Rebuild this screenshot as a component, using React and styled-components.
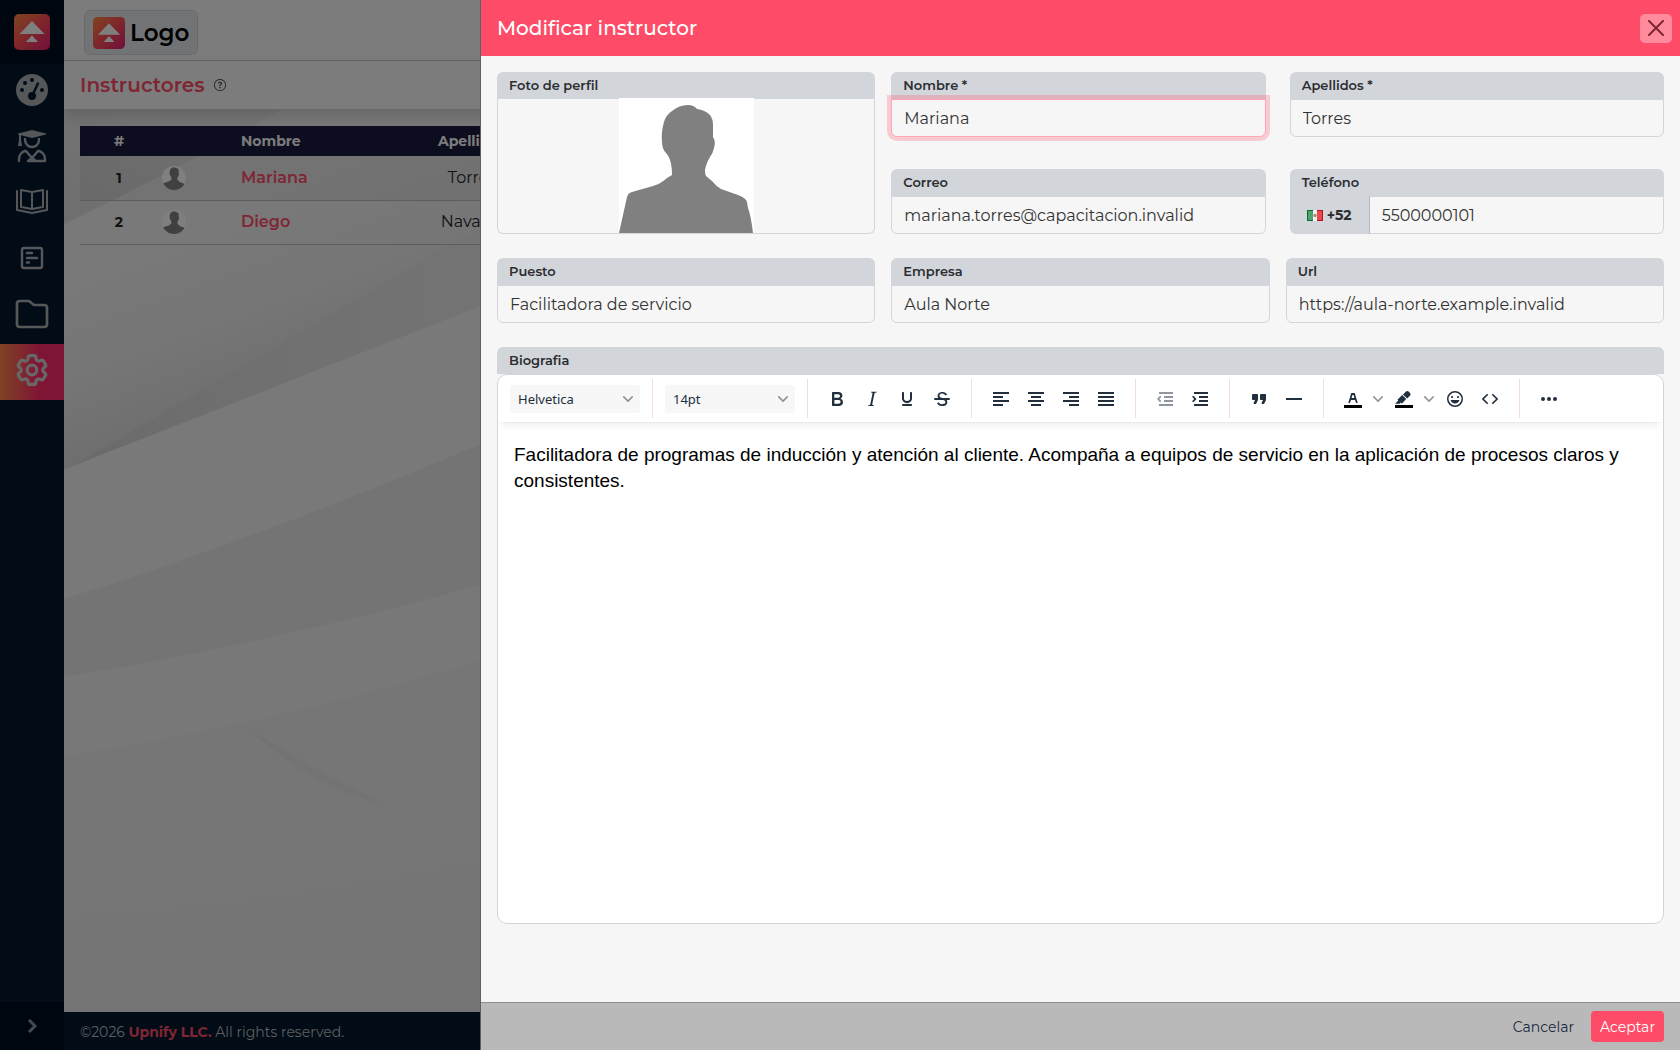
import React from 'react'
import styled, { createGlobalStyle, css } from 'styled-components'
import { BsQuestionCircle } from 'react-icons/bs'
import { HiOutlineCog6Tooth } from 'react-icons/hi2'

const GlobalStyle = createGlobalStyle`
  *, *::before, *::after {
    box-sizing: border-box;
  }
  body {
    margin: 0;
    background: #f3f3f3;
    color: #212529;
    font-family: Montserrat, Inter, sans-serif;
    font-size: 16px;
    line-height: 24px;
  }
  button, input, select, textarea {
    font: inherit;
    color: inherit;
    margin: 0;
  }
`

const Shell = styled.div`
  display: grid;
  grid-template-columns: 64px 1fr;
  min-height: 100vh;
`

const Sidebar = styled.nav`
  display: flex;
  flex-direction: column;
  background: #02182c;
  color: #aaaeb3;
`

const SidebarLogo = styled.a`
  display: flex;
  align-items: center;
  justify-content: center;
  height: 64px;
  background: #010c20;
`

const NavItem = styled.a`
  display: flex;
  justify-content: center;
  height: 56px;
  padding-top: 10px;
  color: inherit;
  ${p => p.$active && css`
    background: linear-gradient(90deg, #ff8648 0%, #ff2a68 60%, #ff2a68 100%);
    color: #cfcfcf;
  `}
  svg {
    width: 32px;
    height: 32px;
    overflow: visible;
  }
`

const Expand = styled.button`
  height: 48px;
  margin-top: auto;
  padding: 0;
  border: 0;
  background: #010c20;
  color: #8d929c;
  svg {
    display: block;
    margin: auto;
  }
`

const Main = styled.div`
  display: flex;
  flex-direction: column;
  min-width: 0;
`

const TopBar = styled.header`
  display: flex;
  align-items: center;
  height: 61px;
  padding: 5px 20px 0;
  background: #f8f8f8;
  border-bottom: 1px solid #c8c8c8;
`

const Brand = styled.a`
  display: flex;
  align-items: center;
  gap: 5px;
  height: 45px;
  padding: 0 8px;
  border: 1px solid #d2d6da;
  border-radius: 6px;
  background: #e4e7ea;
  color: #000;
  font-size: 23px;
  font-weight: 600;
  text-decoration: none;
`

const TitleBar = styled.div`
  position: relative;
  z-index: 1;
  display: flex;
  align-items: center;
  gap: 9px;
  height: 48px;
  padding: 0 16px;
  background: #f8f8f8;
  box-shadow: 0 8px 16px rgba(0, 0, 0, 0.15);
`

const PageTitle = styled.h1`
  margin: 0;
  color: #fe4c68;
  font-size: 20px;
  font-weight: 600;
`

const Content = styled.main`
  position: relative;
  flex: 1;
  padding: 17px 16px;
  background: #f0f0f0;
  overflow: hidden;
`

const Waves = styled.svg`
  position: absolute;
  inset: 0;
  width: 100%;
  height: 100%;
`

const Table = styled.table`
  position: relative;
  width: 100%;
  border-collapse: collapse;
  table-layout: fixed;
  th, td {
    padding: 0 8px;
    text-align: center;
  }
  thead th {
    height: 30px;
    background: #1a1b40;
    color: #f8f8f8;
    font-size: 14px;
    font-weight: 700;
  }
  tbody tr {
    height: 44px;
    border-bottom: 1px solid #bbbbbb;
  }
  tbody tr:nth-child(odd) {
    background: rgba(0, 0, 0, 0.05);
  }
  tbody th {
    font-size: 14px;
  }
  .name {
    text-align: left;
  }
`

const PhotoCell = styled.td`
  && {
    padding: 0 4px;
    text-align: left;
  }
  svg {
    display: block;
    border-radius: 50%;
  }
`

const NameLink = styled.a`
  color: #fe4c68;
  font-weight: 600;
  text-decoration: none;
`

const PageFooter = styled.footer`
  height: 38px;
  padding: 8px 16px;
  background: #02182c;
  color: #b9bcc0;
  font-size: 14px;
  strong {
    color: #fe4c68;
    font-weight: 700;
  }
`

const Backdrop = styled.div`
  position: fixed;
  z-index: 2;
  inset: 0;
  background: rgba(0, 0, 0, 0.5);
`

const Drawer = styled.aside`
  position: fixed;
  z-index: 3;
  top: 0;
  right: 0;
  bottom: 0;
  display: flex;
  flex-direction: column;
  width: min(1200px, 100%);
  background: #f6f6f6;
  border-left: 1px solid #606060;
`

const DrawerHeader = styled.header`
  display: flex;
  align-items: center;
  justify-content: space-between;
  height: 56px;
  padding: 0 8px 0 16px;
  background: #fe4c68;
  color: #fff;
`

const DrawerTitle = styled.h2`
  margin: 0;
  font-size: 20px;
  font-weight: 500;
`

const CloseButton = styled.button`
  display: flex;
  align-items: center;
  justify-content: center;
  width: 32px;
  height: 29px;
  padding: 0;
  border: 0;
  border-radius: 5px;
  background: #ff8b9d;
  color: #7f2634;
`

const DrawerBody = styled.form`
  flex: 1;
  display: flex;
  flex-direction: column;
  gap: 24px;
  padding: 16px;
  overflow: auto;
`

const Columns = styled.div`
  display: grid;
  grid-template-columns: repeat(3, 1fr);
  gap: 16px;
`

const NameFields = styled.div`
  grid-column: span 2;
  display: grid;
  grid-template-columns: 1fr 1fr;
  gap: 32px 24px;
`

const Field = styled.div`
  display: flex;
  flex-direction: column;
  min-width: 0;
`

const Label = styled.label`
  height: 27px;
  padding: 0 12px;
  border-radius: 6px 6px 0 0;
  background: #d2d5da;
  color: #2b2d30;
  font-size: 13px;
  font-weight: 600;
  line-height: 27px;
`

const Input = styled.input`
  width: 100%;
  height: 38px;
  padding: 0 12px;
  border: 1px solid #d2d5da;
  border-radius: 0 0 6px 6px;
  outline: 0;
  background: #f6f6f6;
  color: #333;
  ${p => p.$focused && css`
    border-color: #ffa5b3;
    box-shadow: 0 0 0 4px rgba(254, 76, 104, 0.25);
  `}
`

const Photo = styled.div`
  display: flex;
  justify-content: center;
  height: 135px;
  border: 1px solid #d2d5da;
  border-top: 0;
  border-radius: 0 0 6px 6px;
  svg {
    margin-top: -1px;
  }
`

const PhoneGroup = styled.div`
  display: flex;
  ${Input} {
    flex: 1;
    min-width: 0;
    border-left: 0;
    border-radius: 0 0 6px 0;
  }
`

const CountryCode = styled.button`
  display: flex;
  align-items: center;
  justify-content: center;
  gap: 4px;
  width: 80px;
  padding: 0 8px;
  border: 0;
  border-right: 1px solid #b3b8c4;
  border-radius: 0 0 0 6px;
  background: #d2d5da;
  color: #2b2d30;
  font-size: 14px;
  font-weight: 700;
`

const Editor = styled.div`
  display: flex;
  flex-direction: column;
  height: 550px;
  border: 1px solid #d2d5da;
  border-radius: 10px;
  background: #fff;
  overflow: hidden;
`

const EditorToolbar = styled.div`
  display: flex;
  height: 47px;
  padding: 4px 0;
  box-shadow: 0 2px 2px -2px rgba(34, 47, 62, 0.1), 0 8px 8px -4px rgba(34, 47, 62, 0.07);
`

const ToolGroup = styled.div`
  display: flex;
  align-items: center;
  gap: 1px;
  padding: 0 12px;
  color: #222f3e;
  border-right: 1px solid #f0dcdf;
  &:last-child {
    border-right: 0;
  }
`

const ToolButton = styled.button`
  display: flex;
  align-items: center;
  justify-content: center;
  width: ${p => (p.$narrow ? '16px' : '34px')};
  height: 28px;
  margin-left: ${p => (p.$narrow ? '-1px' : '0')};
  padding: 0;
  border: 0;
  background: none;
  opacity: ${p => (p.disabled || p.$narrow ? 0.5 : 1)};
`

const Picker = styled.div`
  position: relative;
  width: 130px;
  height: 28px;
  color: #222f3e;
  select {
    width: 100%;
    height: 100%;
    padding: 1px 8px 0;
    border: 0;
    border-radius: 3px;
    appearance: none;
    background: #f7f7f7;
    font-family: 'Noto Sans', sans-serif;
    font-size: 13px;
  }
  svg {
    position: absolute;
    top: 9px;
    right: 7px;
    opacity: 0.5;
    pointer-events: none;
  }
`

const EditorText = styled.textarea`
  flex: 1;
  padding: 20px 16px;
  border: 0;
  outline: 0;
  resize: none;
  background: transparent;
  color: #000;
  font-family: Helvetica, 'Liberation Sans', sans-serif;
  font-size: 19px;
  line-height: 26px;
`

const DrawerFooter = styled.footer`
  display: flex;
  align-items: center;
  justify-content: flex-end;
  gap: 8px;
  height: 48px;
  padding: 0 16px;
  border-top: 1px solid #8f8f8f;
  background: #b9b9b9;
`

const Button = styled.button`
  height: 31px;
  padding: 0 9px;
  border: 0;
  border-radius: 4px;
  background: ${p => (p.$primary ? '#fe4c68' : 'transparent')};
  color: ${p => (p.$primary ? '#fff' : '#1b2a41')};
  font-size: 14px;
`

const LogoMark = ({ size, id }) => (
  <svg width={size} height={size} viewBox="0 0 36 36" aria-hidden="true">
    <defs>
      <linearGradient id={id} x1="0" y1="0" x2="1" y2="1">
        <stop offset="0" stopColor="#ff8a3c" />
        <stop offset="0.5" stopColor="#fe4c58" />
        <stop offset="1" stopColor="#e01f75" />
      </linearGradient>
    </defs>
    <rect width="36" height="36" rx="5" fill={`url(#${id})`} />
    <path d="M18 7 30.500 20h-25ZM18 21.500 24 28H12Z" fill="#fff" />
  </svg>
)

const Silhouette = ({ size }) => (
  <svg width={size} height={size} viewBox="0 0 135 135" role="img" aria-label="Foto">
    <rect width="135" height="135" fill="#fff" />
    <path
      fill="#808080"
      d="M0 135 8 99Q9 95 13 94L34 88Q43 85 48 80L53 77Q53 68 51 62 50 58 47 55 43 51 43 44 42 34 45 24 47 17 53 13 60 7 69 7 75 7 78 11 86 12 91 17 94 21 94 27L94 39Q97 43 95 50 94 55 91 59 88 64 87 68 85 73 87 78L93 83Q97 88 102 91L119 97Q127 100 128 104L129 110Q132 118 134 135Z"
    />
  </svg>
)

const Chevron = () => (
  <svg width="10" height="10" viewBox="0 0 10 10" aria-hidden="true">
    <path fill="currentColor" d="M8.7 2.2c.3-.3.8-.3 1 0 .4.4.4.9 0 1.2L5.7 7.8c-.3.3-.9.3-1.2 0L.2 3.4a.8.8 0 0 1 0-1.2c.3-.3.8-.3 1.1 0L5 6l3.7-3.8Z" />
  </svg>
)

const Flag = () => (
  <svg width="16" height="11" viewBox="0 0 16 11" aria-hidden="true">
    <rect width="16" height="11" fill="#f2f2f2" />
    <rect width="6" height="11" fill="#12692f" />
    <rect x="1" y="1" width="5" height="9" fill="#4da56d" />
    <rect x="10" width="6" height="11" fill="#b4121c" />
    <rect x="10" y="1" width="5" height="9" fill="#ea4a4f" />
    <circle cx="8" cy="5.500" r="1.700" fill="#b08a76" />
  </svg>
)

const NavGlyph = ({ weight = 2.4, children }) => (
  <svg viewBox="0 0 32 32" fill="none" stroke="currentColor" strokeWidth={weight} strokeLinejoin="round" strokeLinecap="round" aria-hidden="true">
    {children}
  </svg>
)

const navItems = [
  {
    label: 'Tablero',
    icon: (
      <NavGlyph>
        <circle cx="16" cy="16" r="16" fill="currentColor" stroke="none" />
        <g fill="#02182c" stroke="none">
          <circle cx="6" cy="16" r="2" />
          <circle cx="9" cy="9" r="2" />
          <circle cx="16" cy="6" r="2" />
          <circle cx="26" cy="16" r="2" />
          <circle cx="16" cy="22" r="4" />
        </g>
        <path d="M16.500 21 22 9.500" stroke="#02182c" />
      </NavGlyph>
    ),
  },
  {
    label: 'Alumnos',
    icon: (
      <NavGlyph>
        <path d="M2 3.500 16 0l14 3.500v1L16 8 2 4.500Z" fill="currentColor" stroke="none" />
        <path d="M3 4h2v6l1 6H2l1-6Z" fill="currentColor" stroke="none" />
        <path d="M9 9c0 5 3 8 7 8s7-3 7-8" />
        <path d="M3 31v-2c0-4 3-7 6-8h1l6 7 6-7h1c3 1 6 4 6 8v2H12l4-3M16 28l4 3" />
      </NavGlyph>
    ),
  },
  {
    label: 'Cursos',
    icon: (
      <NavGlyph weight={2}>
        <path d="M1 5v19l15 3 15-3V5M5 4l11 2 11-2v17l-11 2-11-2ZM16 6v17" />
      </NavGlyph>
    ),
  },
  {
    label: 'Evaluaciones',
    icon: (
      <NavGlyph>
        <rect x="6" y="6" width="20" height="20" rx="2" />
        <path d="M11 11h5M11 16h10M11 20.500h2" />
      </NavGlyph>
    ),
  },
  {
    label: 'Archivos',
    icon: (
      <NavGlyph weight={2.7}>
        <path d="M1 5.500A2.500 2.500 0 0 1 3.500 3H13l5 4h10.500A2.500 2.500 0 0 1 31 9.500v17a2.500 2.500 0 0 1-2.500 2.500h-25A2.500 2.500 0 0 1 1 26.500Z" />
      </NavGlyph>
    ),
  },
  {
    label: 'Configuración',
    active: true,
    icon: <HiOutlineCog6Tooth viewBox="2 2 20 20" strokeWidth={2} aria-hidden="true" />,
  },
]

const instructors = [
  { name: 'Mariana', surname: 'Torres' },
  { name: 'Diego', surname: 'Navarro' },
]

const line = (x, y, w) => `M${x} ${y}h${w}v2h-${w}Z`

const icons = {
  bold: 'M7.8 19c-.3 0-.5 0-.6-.2l-.2-.5V5.7c0-.2 0-.4.2-.5l.6-.2h5c1.5 0 2.7.3 3.5 1 .7.6 1.1 1.4 1.1 2.5a3 3 0 0 1-.6 1.9c-.4.6-1 1-1.6 1.2.4.1.9.3 1.3.6s.8.7 1 1.2c.4.4.5 1 .5 1.6 0 1.3-.4 2.3-1.3 3-.8.7-2.1 1-3.8 1H7.8Zm5-8.3c.6 0 1.2-.1 1.6-.5.4-.3.6-.7.6-1.3 0-1.1-.8-1.7-2.3-1.7H9.3v3.5h3.4Zm.5 6c.7 0 1.3-.1 1.7-.4.4-.4.6-.9.6-1.5s-.2-1-.7-1.4c-.4-.3-1-.4-2-.4H9.4v3.8h4Z',
  italic: 'm16.7 4.7-.1.9h-.3c-.6 0-1 0-1.4.3-.3.3-.4.6-.5 1.1l-2.1 9.8v.6c0 .5.4.8 1.4.8h.2l-.2.8H8l.2-.8h.2c1.1 0 1.8-.5 2-1.5l2-9.8.1-.5c0-.6-.4-.8-1.4-.8h-.3l.2-.9h5.800Z',
  underline: 'M16 5c.6 0 1 .4 1 1v5.5a4 4 0 0 1-.4 1.8l-1 1.4a5.3 5.3 0 0 1-5.5 1 5 5 0 0 1-1.6-1c-.5-.4-.8-.9-1.1-1.4a4 4 0 0 1-.4-1.8V6c0-.6.4-1 1-1s1 .4 1 1v5.5c0 .3 0 .6.2 1l.6.7a3.3 3.3 0 0 0 2.2.8 3.4 3.4 0 0 0 2.2-.8c.3-.2.4-.5.6-.8l.2-.9V6c0-.6.4-1 1-1ZM8 17h8c.6 0 1 .4 1 1s-.4 1-1 1H8a1 1 0 0 1 0-2Z',
  strike: 'M15.6 8.5c-.5-.7-1-1.100-1.300-1.300-.6-.4-1.300-.6-2-.6-2.700 0-2.800 1.700-2.800 2.100 0 1.600 1.800 2 3.200 2.300 4.400.9 4.600 2.800 4.600 3.900 0 1.400-.7 4.100-5 4.100A6.200 6.200 0 0 1 7 16.400l1.500-1.100c.4.6 1.600 2 3.700 2 1.600 0 2.500-.4 3-1.200.4-.8.3-2-.8-2.600-.7-.4-1.600-.7-2.900-1-1-.2-3.900-.8-3.900-3.600C7.600 6 10.300 5 12.400 5c2.900 0 4.200 1.600 4.700 2.400l-1.500 1.100Z',
  left: line(4, 5, 16) + line(4, 9, 10) + line(4, 13, 16) + line(4, 17, 10),
  center: line(4, 5, 16) + line(7, 9, 10) + line(4, 13, 16) + line(7, 17, 10),
  right: line(4, 5, 16) + line(10, 9, 10) + line(4, 13, 16) + line(10, 17, 10),
  justify: line(4, 5, 16) + line(4, 9, 16) + line(4, 13, 16) + line(4, 17, 16),
  outdent: line(6, 5, 14) + line(11, 9, 9) + line(11, 13, 9) + line(6, 17, 14) + 'M8.500 9.800 6.300 12l2.200 2.200-1.400 1L4 12l3.100-3.200Z',
  indent: line(6, 5, 14) + line(11, 9, 9) + line(11, 13, 9) + line(6, 17, 14) + 'M4 9.800 6.200 12 4 14.200l1.400 1L8.500 12 5.400 8.800Z',
  quote: 'M7.5 17h.9c.4 0 .7-.2.9-.6L11 13V8c0-.6-.4-1-1-1H6a1 1 0 0 0-1 1v4c0 .6.4 1 1 1h2l-1.3 2.7a1 1 0 0 0 .8 1.3Zm8 0h.9c.4 0 .7-.2.9-.6L19 13V8c0-.6-.4-1-1-1h-4a1 1 0 0 0-1 1v4c0 .6.4 1 1 1h2l-1.3 2.7a1 1 0 0 0 .8 1.3Z',
  rule: line(4, 11, 16),
  color: 'M8.700 16h-.8a.5.5 0 0 1-.5-.6l2.700-9c.1-.3.3-.4.5-.4h2.800c.2 0 .4.1.5.4l2.700 9a.5.5 0 0 1-.5.6h-.8a.5.5 0 0 1-.4-.4l-.7-2.200c0-.3-.3-.4-.5-.4h-3.400c-.2 0-.4.1-.5.4l-.7 2.200c0 .3-.2.4-.4.4Zm2.600-7.600-.6 2a.5.5 0 0 0 .5.6h1.600a.5.5 0 0 0 .5-.6l-.6-2c0-.3-.3-.4-.5-.4h-.4c-.2 0-.4.1-.5.4Z',
  highlight: 'M7.700 16.700H3l3.300-3.300-.7-.8L10.200 8l4 4.100-4 4.200c-.2.2-.6.2-.8 0l-.6-.7-1.100 1.100Zm5-7.500L11 7.400l3-2.900a2 2 0 0 1 2.600 0L18 6c.7.7.7 2 0 2.700l-2.900 2.900-1.800-1.800-.5-.6',
  emoji: 'M9 11c.6 0 1-.4 1-1s-.4-1-1-1a1 1 0 0 0-1 1c0 .6.4 1 1 1Zm6 0c.6 0 1-.4 1-1s-.4-1-1-1a1 1 0 0 0-1 1c0 .6.4 1 1 1Zm-3 5.500c2.100 0 4-1.500 4.400-3.500H7.600c.5 2 2.300 3.500 4.400 3.500ZM12 4a8 8 0 1 0 0 16 8 8 0 0 0 0-16Zm0 14.500a6.500 6.500 0 1 1 0-13 6.500 6.500 0 0 1 0 13Z',
  code: 'M9.8 15.7c.3.3.3.8 0 1-.3.4-.9.4-1.2 0l-4.400-4.100a.8.8 0 0 1 0-1.200l4.400-4.200c.3-.3.9-.3 1.200 0 .3.3.3.8 0 1.100L6 12l3.800 3.700ZM14.200 15.700c-.3.3-.3.8 0 1 .4.4.9.4 1.200 0l4.400-4.100c.3-.3.3-.9 0-1.200l-4.400-4.200a.8.8 0 0 0-1.200 0c-.3.3-.3.8 0 1.100L18 12l-3.800 3.700Z',
  more: 'M6 10a2 2 0 1 0 0 4 2 2 0 0 0 0-4Zm12 0a2 2 0 1 0 0 4 2 2 0 0 0 0-4Zm-6 0a2 2 0 1 0 0 4 2 2 0 0 0 0-4Z',
}

const Tool = ({ icon, label, bar, disabled }) => (
  <ToolButton type="button" aria-label={label} disabled={disabled}>
    <svg width="24" height="24" viewBox="0 0 24 24" fill="currentColor" fillRule="evenodd" aria-hidden="true">
      <path d={icons[icon]} />
      {icon === 'strike' && <path d="M5 11h14a1 1 0 0 1 0 2H5a1 1 0 0 1 0-2Z" />}
      {bar && <path d="M3 18h18v3H3Z" fill="#000" />}
    </svg>
  </ToolButton>
)

const DropArrow = ({ label }) => (
  <ToolButton type="button" $narrow aria-label={label}>
    <Chevron />
  </ToolButton>
)

const TextField = ({ id, label, value, type = 'text', focused }) => (
  <Field>
    <Label htmlFor={id}>{label}</Label>
    <Input id={id} type={type} defaultValue={value} $focused={focused} />
  </Field>
)

const Background = () => (
  <Waves viewBox="0 0 1616 903" preserveAspectRatio="xMinYMin slice" aria-hidden="true">
    <defs>
      <linearGradient id="fold" gradientUnits="userSpaceOnUse" x1="120" y1="120" x2="190" y2="310">
        <stop offset="0" stopColor="#f3f3f3" />
        <stop offset="0.5" stopColor="#ececec" />
        <stop offset="1" stopColor="#dadada" />
      </linearGradient>
      <linearGradient id="wedge" gradientUnits="userSpaceOnUse" x1="0" y1="0" x2="417" y2="0">
        <stop offset="0" stopColor="#d4d4d4" />
        <stop offset="0.4" stopColor="#dfdfdf" />
        <stop offset="1" stopColor="#e8e8e8" />
      </linearGradient>
      <linearGradient id="corner" gradientUnits="userSpaceOnUse" x1="80" y1="0" x2="20" y2="110">
        <stop offset="0" stopColor="#ebebeb" />
        <stop offset="1" stopColor="#dedede" />
      </linearGradient>
    </defs>
    <path fill="url(#fold)" d="M0 0H1616V0L417 197 0 361Z" />
    <path fill="url(#corner)" d="M0 0H219Q112 62 0 115Z" />
    <path fill="url(#wedge)" d="M9 357 373 143 1616-500V-100L417 197Z" />
    <path fill="#f3f3f3" d="M0 361 9 357 417 197 1616-100V0L417 335Q209 424 0 490Z" />
    <path fill="#e8e8e8" d="M0 490Q209 424 417 335L1616 0V200L417 476Q209 534 0 568Z" />
    <path fill="#f1f1f1" d="M0 568Q209 534 417 476L1616 200V300L417 551Q209 615 0 647Z" />
    <path fill="#ededed" d="M0 647Q209 615 417 551L1616 300V520L417 751Q209 798 0 809Z" />
    <path fill="#e6e6e6" d="M183 618Q240 655 321 696 240 675 183 618Z" />
    <path fill="#ebebeb" d="M0 809Q209 798 417 751L1616 520V903H0Z" />
  </Waves>
)

const InstructorsPage = () => (
  <Shell>
    <Sidebar>
      <SidebarLogo href="#" aria-label="Inicio">
        <LogoMark size={36} id="logoSide" />
      </SidebarLogo>
      {navItems.map(item => (
        <NavItem key={item.label} href="#" aria-label={item.label} $active={item.active}>
          {item.icon}
        </NavItem>
      ))}
      <Expand type="button" aria-label="Expandir">
        <svg width="14" height="14" viewBox="0 0 14 14" fill="none" stroke="currentColor" strokeWidth="3" aria-hidden="true">
          <path d="m4 1 6 6-6 6" />
        </svg>
      </Expand>
    </Sidebar>
    <Main>
      <TopBar>
        <Brand href="#">
          <LogoMark size={32} id="logoTop" />
          Logo
        </Brand>
      </TopBar>
      <TitleBar>
        <PageTitle>Instructores</PageTitle>
        <BsQuestionCircle size={12} aria-hidden="true" />
      </TitleBar>
      <Content>
        <Background />
        <Table>
          <colgroup>
            <col width="78" />
            <col width="75" />
            <col width="167" />
            <col width="144" />
            <col />
          </colgroup>
          <thead>
            <tr>
              <th scope="col">#</th>
              <th aria-label="Foto" />
              <th scope="col" className="name">Nombre</th>
              <th scope="col">Apellidos</th>
              <th />
            </tr>
          </thead>
          <tbody>
            {instructors.map((person, i) => (
              <tr key={person.name}>
                <th scope="row">{i + 1}</th>
                <PhotoCell>
                  <Silhouette size={24} />
                </PhotoCell>
                <td className="name">
                  <NameLink href="#">{person.name}</NameLink>
                </td>
                <td>{person.surname}</td>
                <td />
              </tr>
            ))}
          </tbody>
        </Table>
      </Content>
      <PageFooter>
        ©2026 <strong>Upnify LLC.</strong> All rights reserved.
      </PageFooter>
    </Main>
  </Shell>
)

const BioEditor = () => (
  <Field>
    <Label htmlFor="bio">Biografia</Label>
    <Editor>
      <EditorToolbar>
        <ToolGroup>
          <Picker>
            <select aria-label="Fuente" defaultValue="Helvetica">
              <option>Helvetica</option>
            </select>
            <Chevron />
          </Picker>
        </ToolGroup>
        <ToolGroup>
          <Picker>
            <select aria-label="Tamaño" defaultValue="14pt">
              <option>14pt</option>
            </select>
            <Chevron />
          </Picker>
        </ToolGroup>
        <ToolGroup>
          <Tool icon="bold" label="Negrita" />
          <Tool icon="italic" label="Cursiva" />
          <Tool icon="underline" label="Subrayado" />
          <Tool icon="strike" label="Tachado" />
        </ToolGroup>
        <ToolGroup>
          <Tool icon="left" label="Alinear a la izquierda" />
          <Tool icon="center" label="Centrar" />
          <Tool icon="right" label="Alinear a la derecha" />
          <Tool icon="justify" label="Justificar" />
        </ToolGroup>
        <ToolGroup>
          <Tool icon="outdent" label="Reducir sangría" disabled />
          <Tool icon="indent" label="Aumentar sangría" />
        </ToolGroup>
        <ToolGroup>
          <Tool icon="quote" label="Cita" />
          <Tool icon="rule" label="Línea horizontal" />
        </ToolGroup>
        <ToolGroup>
          <Tool icon="color" label="Color de texto" bar />
          <DropArrow label="Elegir color de texto" />
          <Tool icon="highlight" label="Color de fondo" bar />
          <DropArrow label="Elegir color de fondo" />
          <Tool icon="emoji" label="Emojis" />
          <Tool icon="code" label="Código fuente" />
        </ToolGroup>
        <ToolGroup>
          <Tool icon="more" label="Más" />
        </ToolGroup>
      </EditorToolbar>
      <EditorText
        id="bio"
        spellCheck={false}
        defaultValue="Facilitadora de programas de inducción y atención al cliente. Acompaña a equipos de servicio en la aplicación de procesos claros y consistentes."
      />
    </Editor>
  </Field>
)

const EditDrawer = () => (
  <Drawer role="dialog" aria-labelledby="drawer-title">
    <DrawerHeader>
      <DrawerTitle id="drawer-title">Modificar instructor</DrawerTitle>
      <CloseButton type="button" aria-label="Cerrar">
        <svg width="16" height="16" viewBox="0 0 16 16" stroke="currentColor" strokeWidth="2" strokeLinecap="round" aria-hidden="true">
          <path d="m1 1 14 14M15 1 1 15" />
        </svg>
      </CloseButton>
    </DrawerHeader>
    <DrawerBody id="instructor-form">
      <Columns>
        <Field>
          <Label as="div">Foto de perfil</Label>
          <Photo>
            <Silhouette size={135} />
          </Photo>
        </Field>
        <NameFields>
          <TextField id="nombre" label="Nombre *" value="Mariana" focused />
          <TextField id="apellidos" label="Apellidos *" value="Torres" />
          <TextField id="correo" label="Correo" type="email" value="mariana.torres@capacitacion.invalid" />
          <Field>
            <Label htmlFor="telefono">Teléfono</Label>
            <PhoneGroup>
              <CountryCode type="button">
                <Flag />
                +52
              </CountryCode>
              <Input id="telefono" type="tel" defaultValue="5500000101" />
            </PhoneGroup>
          </Field>
        </NameFields>
      </Columns>
      <Columns>
        <TextField id="puesto" label="Puesto" value="Facilitadora de servicio" />
        <TextField id="empresa" label="Empresa" value="Aula Norte" />
        <TextField id="url" label="Url" type="url" value="https://aula-norte.example.invalid" />
      </Columns>
      <BioEditor />
    </DrawerBody>
    <DrawerFooter>
      <Button type="button">Cancelar</Button>
      <Button type="submit" form="instructor-form" $primary>Aceptar</Button>
    </DrawerFooter>
  </Drawer>
)

const App = () => (
  <>
    <GlobalStyle />
    <InstructorsPage />
    <Backdrop />
    <EditDrawer />
  </>
)

export default App
